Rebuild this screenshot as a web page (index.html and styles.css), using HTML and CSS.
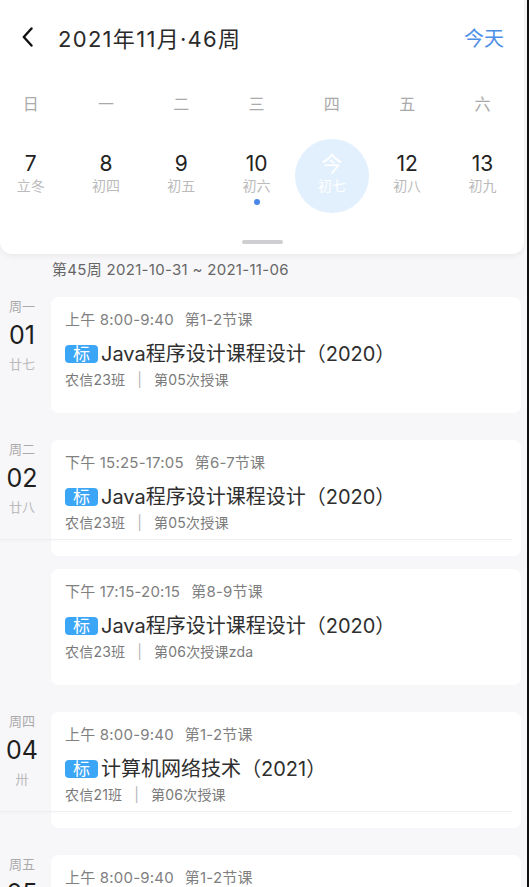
FILE: index.html
```html
<!DOCTYPE html>
<html lang="zh-CN">
<head>
<meta charset="UTF-8">
<title>课表</title>
<link rel="stylesheet" href="styles.css">
</head>
<body>
<div class="phone">
    <header class="panel">
        <div class="topbar">
            <svg class="back" width="11" height="20" viewBox="0 0 11 20">
                <path d="M9.5 1.5 L1.8 10 L9.5 18.5" fill="none" stroke="#111" stroke-width="2.4" stroke-linecap="round" stroke-linejoin="round"/>
            </svg>
            <h1>2021年11月·46周</h1>
            <a class="today-link">今天</a>
        </div>
        <div class="weekdays">
            <span>日</span><span>一</span><span>二</span><span>三</span><span>四</span><span>五</span><span>六</span>
        </div>
        <div class="dates">
            <div class="date"><span class="num">7</span><span class="lunar">立冬</span></div>
            <div class="date"><span class="num">8</span><span class="lunar">初四</span></div>
            <div class="date"><span class="num">9</span><span class="lunar">初五</span></div>
            <div class="date"><span class="num">10</span><span class="lunar">初六</span><span class="dot"></span></div>
            <div class="date is-today"><span class="num">今</span><span class="lunar">初七</span></div>
            <div class="date"><span class="num">12</span><span class="lunar">初八</span></div>
            <div class="date"><span class="num">13</span><span class="lunar">初九</span></div>
        </div>
        <div class="grabber"></div>
    </header>

    <div class="week-label">第45周 2021-10-31 ~ 2021-11-06</div>

    <section class="day">
        <div class="day-side">
            <span class="wk">周一</span>
            <span class="dd">01</span>
            <span class="lu">廿七</span>
        </div>
        <div class="day-cards">
            <div class="card">
                <div class="time">上午 8:00-9:40<span class="period">第1-2节课</span></div>
                <div class="course"><span class="tag">标</span>Java程序设计课程设计（2020）</div>
                <div class="info">农信23班<span class="sep">|</span>第05次授课</div>
            </div>
        </div>
    </section>

    <section class="day pinned">
        <div class="day-side">
            <span class="wk">周二</span>
            <span class="dd">02</span>
            <span class="lu">廿八</span>
        </div>
        <div class="day-cards">
            <div class="card">
                <div class="time">下午 15:25-17:05<span class="period">第6-7节课</span></div>
                <div class="course"><span class="tag">标</span>Java程序设计课程设计（2020）</div>
                <div class="info">农信23班<span class="sep">|</span>第05次授课</div>
            </div>
            <div class="card">
                <div class="time">下午 17:15-20:15<span class="period">第8-9节课</span></div>
                <div class="course"><span class="tag">标</span>Java程序设计课程设计（2020）</div>
                <div class="info">农信23班<span class="sep">|</span>第06次授课zda</div>
            </div>
        </div>
    </section>

    <section class="day pinned">
        <div class="day-side">
            <span class="wk">周四</span>
            <span class="dd">04</span>
            <span class="lu">卅</span>
        </div>
        <div class="day-cards">
            <div class="card">
                <div class="time">上午 8:00-9:40<span class="period">第1-2节课</span></div>
                <div class="course"><span class="tag">标</span>计算机网络技术（2021）</div>
                <div class="info">农信21班<span class="sep">|</span>第06次授课</div>
            </div>
        </div>
    </section>

    <section class="day">
        <div class="day-side">
            <span class="wk">周五</span>
            <span class="dd">05</span>
            <span class="lu">初一</span>
        </div>
        <div class="day-cards">
            <div class="card">
                <div class="time">上午 8:00-9:40<span class="period">第1-2节课</span></div>
                <div class="course"><span class="tag">标</span>计算机网络技术（2021）</div>
                <div class="info">农信21班<span class="sep">|</span>第07次授课</div>
            </div>
        </div>
    </section>
</div>
</body>
</html>
```

FILE: styles.css
```css
html {
    background: #111;
}
body {
    margin: 0;
    font-family: Inter, "Noto Sans CJK SC", sans-serif;
    color: #222;
}
.phone {
    width: 527px;
    height: 887px;
    overflow: hidden;
    background: #f7f6f9;
}
.panel {
    width: 524px;
    padding-bottom: 10px;
    background: #fff;
    border-radius: 0 0 12px 12px;
    box-shadow: 0 2px 6px rgba(0, 0, 0, 0.06);
}
.topbar {
    display: flex;
    align-items: center;
    height: 74px;
    padding: 0 20px 0 22px;
}
.back {
    display: block;
}
.topbar h1 {
    margin: 0 0 0 25px;
    font-size: 22px;
    font-weight: 400;
    letter-spacing: 1.3px;
    color: #2a2a2a;
}
.today-link {
    margin-left: auto;
    font-size: 20px;
    color: #4d8fe6;
}
.weekdays,
.dates {
    display: grid;
    grid-template-columns: repeat(7, 75.3px);
    margin-left: -7px;
}
.weekdays {
    height: 30px;
    margin-top: 14px;
    align-items: center;
    text-align: center;
    font-size: 16px;
    color: #aaa;
}
.dates {
    margin-top: 21px;
}
.date {
    display: flex;
    flex-direction: column;
    align-items: center;
    width: 74px;
    height: 74px;
    margin: 0 auto;
    padding-top: 13px;
    box-sizing: border-box;
    border-radius: 50%;
}
.date .num {
    font-size: 21px;
    line-height: 24px;
    color: #222;
}
.date .lunar {
    font-size: 14px;
    line-height: 20px;
    color: #bbb;
}
.date .dot {
    width: 6px;
    height: 6px;
    margin-top: 3px;
    border-radius: 50%;
    background: #4a86e8;
}
.date.is-today {
    background: #e2f0fd;
}
.date.is-today .num,
.date.is-today .lunar {
    color: #fff;
}
.grabber {
    width: 41px;
    height: 4px;
    margin: 27px auto 0;
    border-radius: 2px;
    background: #cfcfd1;
}
.week-label {
    margin: 7px 0 0 52px;
    font-size: 15px;
    line-height: 18px;
    letter-spacing: 0.3px;
    color: #666;
}
.day {
    display: flex;
    position: relative;
    margin-top: 27px;
}
.week-label + .day {
    margin-top: 18px;
}
.day.pinned::after {
    content: "";
    position: absolute;
    left: 0;
    top: 99px;
    width: 512px;
    height: 1px;
    background: #efeef2;
    box-shadow: 0 1px 3px rgba(0, 0, 0, 0.05);
}
.day-side {
    display: flex;
    flex-direction: column;
    align-items: center;
    width: 44px;
    flex: 0 0 44px;
    margin-right: 7px;
}
.day-side .wk {
    font-size: 13px;
    line-height: 18px;
    color: #aaa;
}
.day-side .dd {
    margin-top: 4px;
    font-size: 25px;
    line-height: 32px;
    color: #1e1e1e;
}
.day-side .lu {
    margin-top: 4px;
    font-size: 13px;
    line-height: 18px;
    color: #bbb;
}
.day-cards {
    display: flex;
    flex-direction: column;
    gap: 13px;
    width: 470px;
}
.card {
    height: 116px;
    padding: 13px 14px 0;
    box-sizing: border-box;
    background: #fff;
    border-radius: 8px;
}
.time {
    font-size: 15px;
    line-height: 20px;
    letter-spacing: 0.2px;
    color: #808080;
}
.period {
    margin-left: 11px;
}
.course {
    display: flex;
    align-items: center;
    margin-top: 10px;
    font-size: 20px;
    line-height: 28px;
    color: #2e2e2e;
}
.tag {
    display: inline-flex;
    align-items: center;
    justify-content: center;
    width: 33px;
    height: 18px;
    margin-right: 3px;
    border-radius: 4px;
    background: #3ba6f6;
    color: #fff;
    font-size: 17px;
}
.info {
    margin-top: 2px;
    font-size: 14px;
    line-height: 20px;
    letter-spacing: 0.2px;
    color: #7a7a7a;
}
.sep {
    margin: 0 12px;
    color: #b5b5b5;
}
```
